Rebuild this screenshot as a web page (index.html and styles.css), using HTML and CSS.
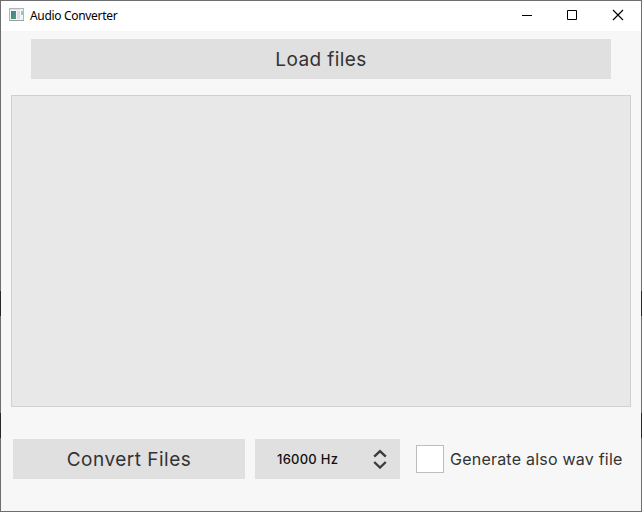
FILE: index.html
```html
<!DOCTYPE html>
<html lang="en">
<head>
<meta charset="utf-8">
<title>Audio Converter</title>
<link rel="stylesheet" href="styles.css">
</head>
<body>
<div class="window">
  <header class="titlebar">
    <svg class="app-icon" width="16" height="14" viewBox="0 0 16 14" shape-rendering="crispEdges">
      <defs><linearGradient id="pane" x1="0" y1="0" x2="1" y2="1"><stop offset="0" stop-color="#4b75a5"/><stop offset="1" stop-color="#4aa36d"/></linearGradient></defs>
      <path fill="#b2b6ba" d="M0 0h15v13H0z"/>
      <path fill="#f2f3f4" d="M1 1h13v11H1z"/>
      <path fill="#dde0e3" d="M1 1h10v1H1zM8 3h3v8H8z"/>
      <path fill="url(#pane)" d="M2 3h5v8H2z"/>
      <path fill="#9fc3bd" d="M12 3h2v4h-2z"/>
      <path fill="#9a9fa4" d="M0 12h15v1H0z"/>
    </svg>
    <h1 class="title">Audio Converter</h1>
    <div class="controls">
      <svg width="45" height="29" viewBox="0 0 45 29" shape-rendering="crispEdges"><path fill="#000" d="M17 14h10v1H17z"/></svg>
      <svg width="45" height="29" viewBox="0 0 45 29"><path fill="none" stroke="#000" d="M17.500 9.500h9v9h-9z"/></svg>
      <svg width="45" height="29" viewBox="0 0 45 29"><path fill="none" stroke="#000" stroke-width="1.150" d="M18 9l10 10M28 9L18 19"/></svg>
    </div>
  </header>
  <main class="content">
    <button class="button load"><span class="load-text">Load files</span></button>
    <div class="file-list"></div>
    <div class="actions">
      <button class="button convert"><span class="convert-text">Convert Files</span></button>
      <div class="spinbox">
        <span class="rate">16000 Hz</span>
        <svg width="14" height="20" viewBox="0 0 14 20"><path fill="none" stroke="#3c3c3c" stroke-width="2.400" d="M1.200 7.700L7 2.200l5.800 5.500M1.200 13L7 18.500l5.800-5.500"/></svg>
      </div>
      <label class="option"><span class="box"></span><span class="option-text">Generate also wav file</span></label>
    </div>
  </main>
</div>
</body>
</html>
```

FILE: styles.css
```css
* { box-sizing: border-box; }
body { margin: 0; overflow: hidden; }
.window {
  width: 642px;
  height: 512px;
  padding: 1px;
  display: flex;
  flex-direction: column;
  background: linear-gradient(#6e6e6e 291px, #282828 291px, #282828 316px, #6e6e6e 316px, #6e6e6e 413px, #282828 413px, #282828 438px, #6e6e6e 438px);
}
.titlebar {
  height: 30px;
  flex: none;
  display: flex;
  padding: 0 1px 0 8px;
  background: #fff;
}
.app-icon { margin-top: 7px; }
.title {
  margin: 0 0 0 5px;
  font: 400 12px/29px "Noto Sans", sans-serif;
  letter-spacing: -0.32px;
  color: #000;
  white-space: nowrap;
}
.controls { display: flex; margin-left: auto; }
.content {
  flex: 1;
  display: flex;
  flex-direction: column;
  padding: 8px 10px 0;
  background: #f7f7f7;
  font-family: Inter, sans-serif;
  color: #333;
}
.button {
  height: 40px;
  padding: 2px 0 0;
  border: 0;
  background: #e0e0e0;
  color: #333;
  font: 400 19px/38px Inter, sans-serif;
  white-space: nowrap;
}
.load { margin: 0 20px; }
.load-text { letter-spacing: 0.4px; }
.convert { width: 232px; }
.convert-text { letter-spacing: 0.5px; }
.file-list {
  height: 312px;
  margin-top: 16px;
  background: #e8e8e8;
  border: 1px solid #d0d0d0;
}
.actions {
  display: flex;
  align-items: center;
  margin-top: 32px;
  padding-left: 2px;
}
.spinbox {
  width: 145px;
  height: 40px;
  margin-left: 10px;
  padding: 0 13px 0 22px;
  display: flex;
  align-items: center;
  justify-content: space-between;
  background: #e0e0e0;
  color: #111;
}
.rate { font-size: 13px; font-weight: 500; letter-spacing: 0.25px; white-space: nowrap; }
.option {
  display: flex;
  align-items: center;
  margin-left: 16px;
  white-space: nowrap;
}
.box {
  width: 28px;
  height: 28px;
  background: #fff;
  border: 1px solid #bdbdbd;
}
.option-text { margin-left: 6px; font-size: 16px; letter-spacing: 0.22px; }
```
